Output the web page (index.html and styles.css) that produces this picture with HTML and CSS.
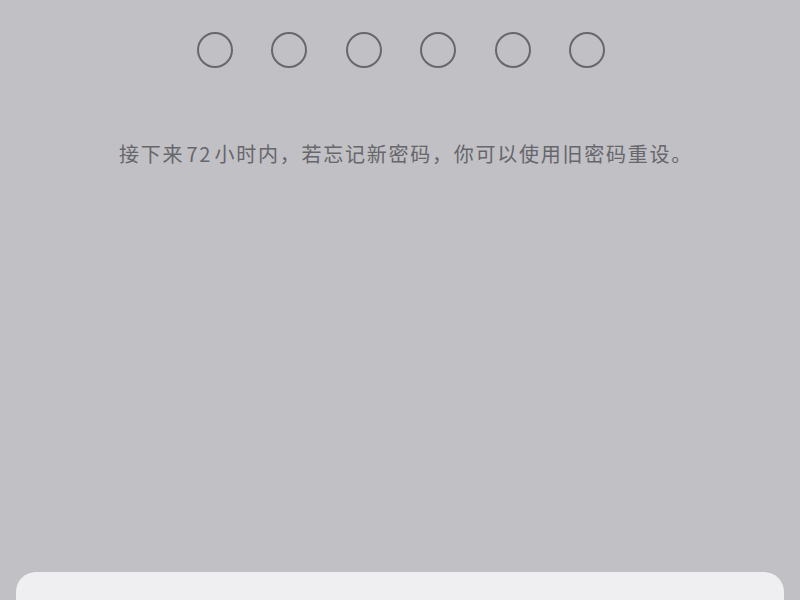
FILE: index.html
```html
<!DOCTYPE html>
<html lang="zh">
<head>
<meta charset="utf-8">
<link rel="stylesheet" href="styles.css">
</head>
<body>
<div class="screen">
  <div class="dots">
    <span class="dot"></span><span class="dot"></span><span class="dot"></span>
    <span class="dot"></span><span class="dot"></span><span class="dot"></span>
  </div>
  <p class="hint">接下来 72 小时内，若忘记新密码，你可以使用旧密码重设。</p>
  <div class="spacer"></div>
  <div class="sheet"></div>
</div>
</body>
</html>
```
FILE: styles.css
```css
html, body {
  margin: 0;
  padding: 0;
  height: 100%;
}
body {
  background: #c1c0c5;
  font-family: "Noto Sans CJK SC", "Noto Sans", sans-serif;
  overflow: hidden;
}
.screen {
  height: 600px;
  display: flex;
  flex-direction: column;
}
.dots {
  display: flex;
  justify-content: center;
  gap: 38.5px;
  padding-top: 32px;
  padding-left: 2px;
}
.dot {
  width: 32px;
  height: 32px;
  border: 2px solid #68686c;
  border-radius: 50%;
  box-sizing: content-box;
}
.hint {
  margin: 0;
  margin-top: 74px;
  text-align: center;
  font-size: 20px;
  font-weight: 400;
  line-height: 24px;
  color: #66666b;
  letter-spacing: 1.75px;
  word-spacing: -4px;
  padding-left: 12px;
}
.spacer {
  flex: 1;
}
.sheet {
  margin: 0 16px;
  height: 28px;
  background: #efeff2;
  border-radius: 20px 20px 0 0;
}
```
